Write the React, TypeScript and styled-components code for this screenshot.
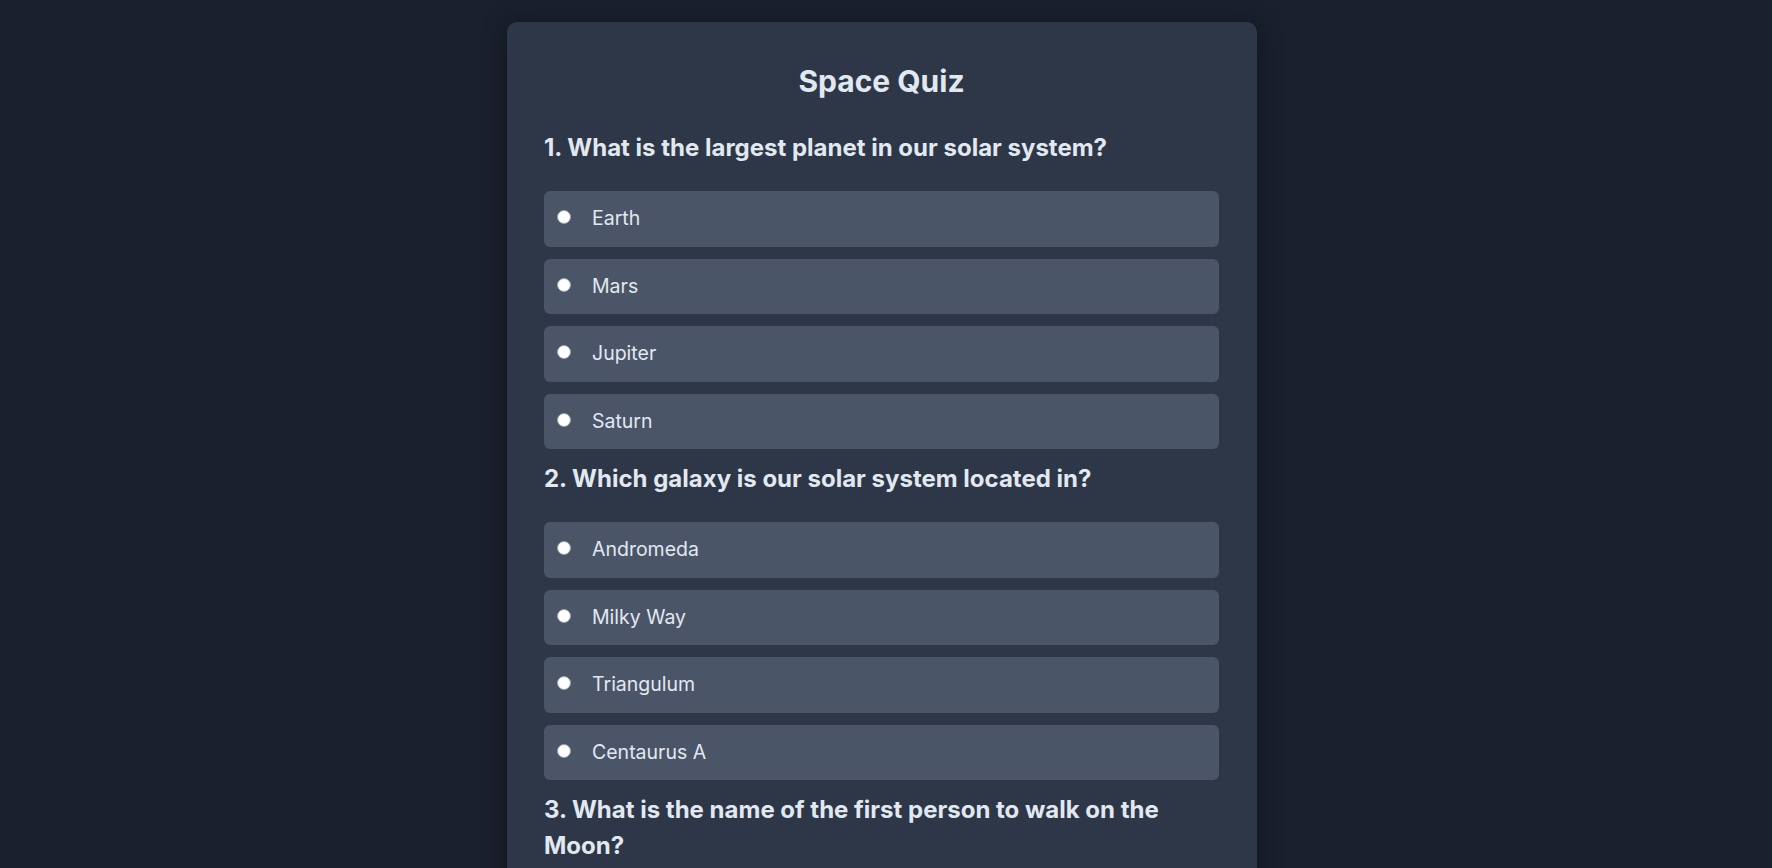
import React from "react";
import styled, { createGlobalStyle } from "styled-components";

const GlobalStyle = createGlobalStyle`
  html, body {
    margin: 0;
    padding: 0;
    background: #1a202c;
    font-family: Inter, "Noto Sans", "Liberation Sans", sans-serif;
    color: #e2e8f0;
  }
  * { box-sizing: border-box; }
`;

const Page = styled.div`
  display: flex;
  justify-content: center;
  padding: 22px 8px 40px 0;
  min-height: 100vh;
`;

const Card = styled.div`
  width: 750px;
  background: #2d3748;
  border-radius: 10px;
  padding: 34.5px 38px 40px 37px;
  box-shadow: 0 4px 24px rgba(0, 0, 0, 0.35);
`;

const Title = styled.h1`
  margin: 0 0 25.5px;
  font-size: 30px;
  line-height: 48px;
  font-weight: 700;
  text-align: center;
  color: #e2e8f0;
`;

const Question = styled.h2`
  margin: 0 0 25px;
  font-size: 24px;
  line-height: 36px;
  font-weight: 700;
  color: #e2e8f0;
`;

const Options = styled.div`
  display: flex;
  flex-direction: column;
  gap: 12px;
  margin-bottom: 12px;
`;

const Option = styled.label`
  display: flex;
  align-items: center;
  gap: 21px;
  padding: 12px 13px;
  min-height: 55.5px;
  background: #4a5568;
  border-radius: 6px;
  font-size: 19.5px;
  line-height: 31px;
  color: #e2e8f0;
  cursor: pointer;
`;

const Radio = styled.input`
  appearance: none;
  -webkit-appearance: none;
  width: 14px;
  height: 14px;
  margin: -3px 0 0 0;
  border-radius: 50%;
  background: #ffffff;
  border: 1px solid #9aa0a8;
  flex: none;
`;

const quiz = [
  {
    q: "1. What is the largest planet in our solar system?",
    name: "q1",
    options: ["Earth", "Mars", "Jupiter", "Saturn"],
  },
  {
    q: "2. Which galaxy is our solar system located in?",
    name: "q2",
    options: ["Andromeda", "Milky Way", "Triangulum", "Centaurus A"],
  },
  {
    q: "3. What is the name of the first person to walk on the Moon?",
    name: "q3",
    options: ["Buzz Aldrin", "Neil Armstrong", "Yuri Gagarin", "Michael Collins"],
  },
];

export default function App() {
  return (
    <>
      <GlobalStyle />
      <Page>
        <Card>
          <Title>Space Quiz</Title>
          {quiz.map((item) => (
            <section key={item.name}>
              <Question>{item.q}</Question>
              <Options>
                {item.options.map((o) => (
                  <Option key={o}>
                    <Radio type="radio" name={item.name} value={o} />
                    <span>{o}</span>
                  </Option>
                ))}
              </Options>
            </section>
          ))}
        </Card>
      </Page>
    </>
  );
}
